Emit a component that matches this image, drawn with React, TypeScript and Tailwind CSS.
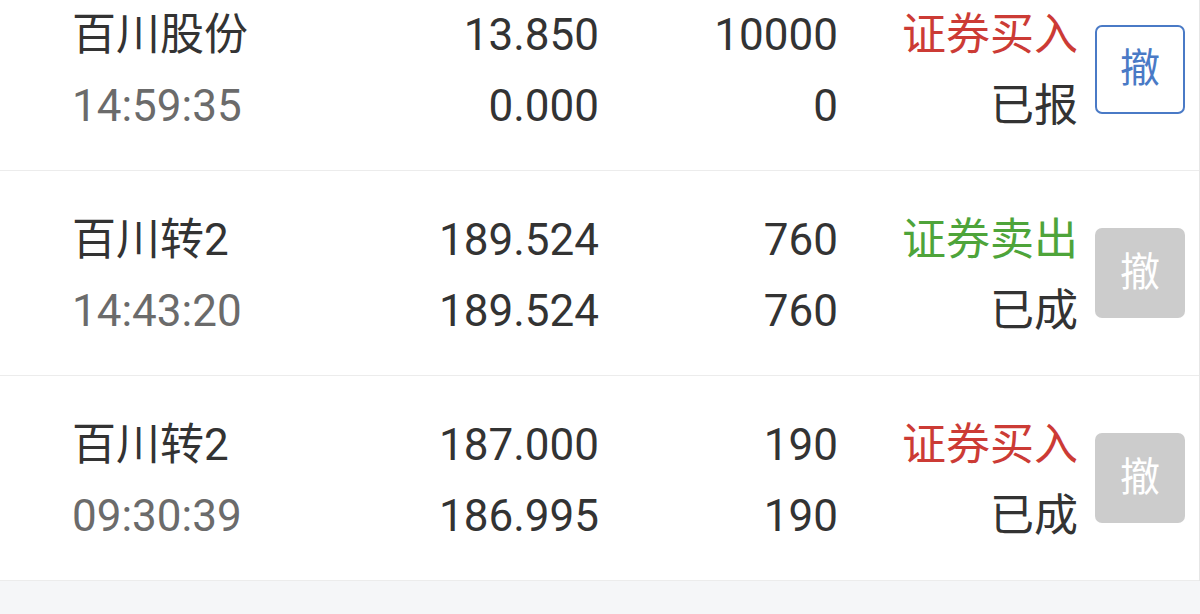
import React from "react";

type Order = {
  name: string;
  time: string;
  price: string;
  dealPrice: string;
  qty: string;
  dealQty: string;
  side: "buy" | "sell";
  status: string;
  cancelable: boolean;
};

const orders: Order[] = [
  { name: "百川股份", time: "14:59:35", price: "13.850", dealPrice: "0.000", qty: "10000", dealQty: "0", side: "buy", status: "已报", cancelable: true },
  { name: "百川转2", time: "14:43:20", price: "189.524", dealPrice: "189.524", qty: "760", dealQty: "760", side: "sell", status: "已成", cancelable: false },
  { name: "百川转2", time: "09:30:39", price: "187.000", dealPrice: "186.995", qty: "190", dealQty: "190", side: "buy", status: "已成", cancelable: false },
];

const font = { fontFamily: 'Roboto, "Noto Sans CJK SC", sans-serif' };

const OrderRow: React.FC<{ order: Order }> = ({ order }) => (
  <div className="flex items-center h-[205px] pl-[72px] border-b border-[#ececec] bg-white">
    <div className="flex flex-col w-[270px] mt-[6px] leading-[71px]">
      <span className="text-[#333333]">{order.name}</span>
      <span className="text-[#6b6b6b]">{order.time}</span>
    </div>
    <div className="flex flex-col w-[257px] mt-[6px] text-right leading-[71px] text-[#333333]">
      <span>{order.price}</span>
      <span>{order.dealPrice}</span>
    </div>
    <div className="flex flex-col w-[239px] mt-[6px] text-right leading-[71px] text-[#333333]">
      <span>{order.qty}</span>
      <span>{order.dealQty}</span>
    </div>
    <div className="flex flex-col w-[240px] mt-[6px] text-right leading-[71px]">
      <span className={order.side === "buy" ? "text-[#cc3b35]" : "text-[#4ea43a]"}>
        {order.side === "buy" ? "证券买入" : "证券卖出"}
      </span>
      <span className="text-[#333333]">{order.status}</span>
    </div>
    {order.cancelable ? (
      <button className="ml-[17px] mt-[2px] w-[90px] h-[89px] flex items-center justify-center rounded-[7px] border-[2.5px] border-[#4a7ac6] text-[#4a7ac6] text-[40px] bg-white">
        撤
      </button>
    ) : (
      <button className="ml-[17px] w-[90px] h-[90px] flex items-center justify-center rounded-[7px] bg-[#cccccc] text-white text-[40px]">
        撤
      </button>
    )}
  </div>
);

export default function App() {
  return (
    <div className="w-[1200px] h-[614px] overflow-hidden bg-[#f5f6f8] text-[44px]" style={font}>
      <div className="-mt-[34px] border-r border-[#e6e6e6]">
        {orders.map((o, i) => (
          <OrderRow key={i} order={o} />
        ))}
      </div>
    </div>
  );
}
